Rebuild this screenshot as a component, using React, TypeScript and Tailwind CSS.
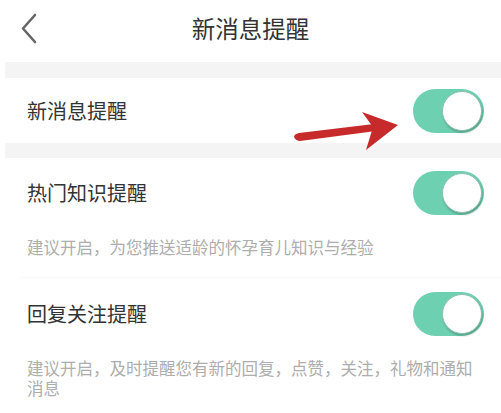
import React from "react";

const Toggle: React.FC = () => (
  <div className="relative w-[71px] h-[44px] rounded-full bg-[#6dd0b0] shrink-0">
    <div className="absolute right-[2px] top-[2px] w-[40px] h-[40px] rounded-full bg-white border border-[#8fbfae] shadow-[1px_2px_2px_rgba(0,0,0,0.2)]" />
  </div>
);

const Row: React.FC<{ label: string; desc?: string }> = ({ label, desc }) => (
  <div className="bg-white pl-[27px] pr-[17px]">
    <div className="flex items-center justify-between h-[65px]">
      <span className="text-[20px] text-[#333]">{label}</span>
      <Toggle />
    </div>
    {desc && (
      <p className="pr-[8px] pt-[12px] pb-[20px] text-[16.5px] leading-[20px] text-[#adadad]">{desc}</p>
    )}
  </div>
);

export default function App() {
  return (
    <div
      className="relative w-[501px] h-[413px] bg-white overflow-hidden"
      style={{ fontFamily: '"Noto Sans CJK SC", "Noto Sans", sans-serif' }}
    >
      <header className="relative flex items-center justify-center h-[62px]">
        <svg className="absolute left-[18px] top-[13px]" width="22" height="32" viewBox="0 0 22 32">
          <path d="M17 2 L5 15.5 L17 29" fill="none" stroke="#666" strokeWidth="2.6" strokeLinecap="round" strokeLinejoin="round" />
        </svg>
        <h1 className="text-[23.5px] text-[#333] font-normal pb-[4px]">新消息提醒</h1>
      </header>
      <div className="ml-[5px] h-[16px] bg-[#f4f4f4]" />
      <Row label="新消息提醒" />
      <div className="ml-[5px] h-[15px] bg-[#f4f4f4]" />
      <div className="pt-[2px]">
        <Row label="热门知识提醒" desc="建议开启，为您推送适龄的怀孕育儿知识与经验" />
      </div>
      <div className="ml-[20px] h-px bg-[#fafafa]" />
      <div className="pt-[3px]">
        <Row label="回复关注提醒" desc="建议开启，及时提醒您有新的回复，点赞，关注，礼物和通知消息" />
      </div>
      <svg className="absolute left-0 top-0 pointer-events-none" width="501" height="413" viewBox="0 0 501 413">
        <path d="M294 137 Q296 141 300 141 L376 131 L374 124 L299 133 Q294 134 294 137 Z" fill="#c62a2a" />
        <path d="M398 125 L362 112 L373 127 L366 150 Z" fill="#c62a2a" />
      </svg>
    </div>
  );
}
